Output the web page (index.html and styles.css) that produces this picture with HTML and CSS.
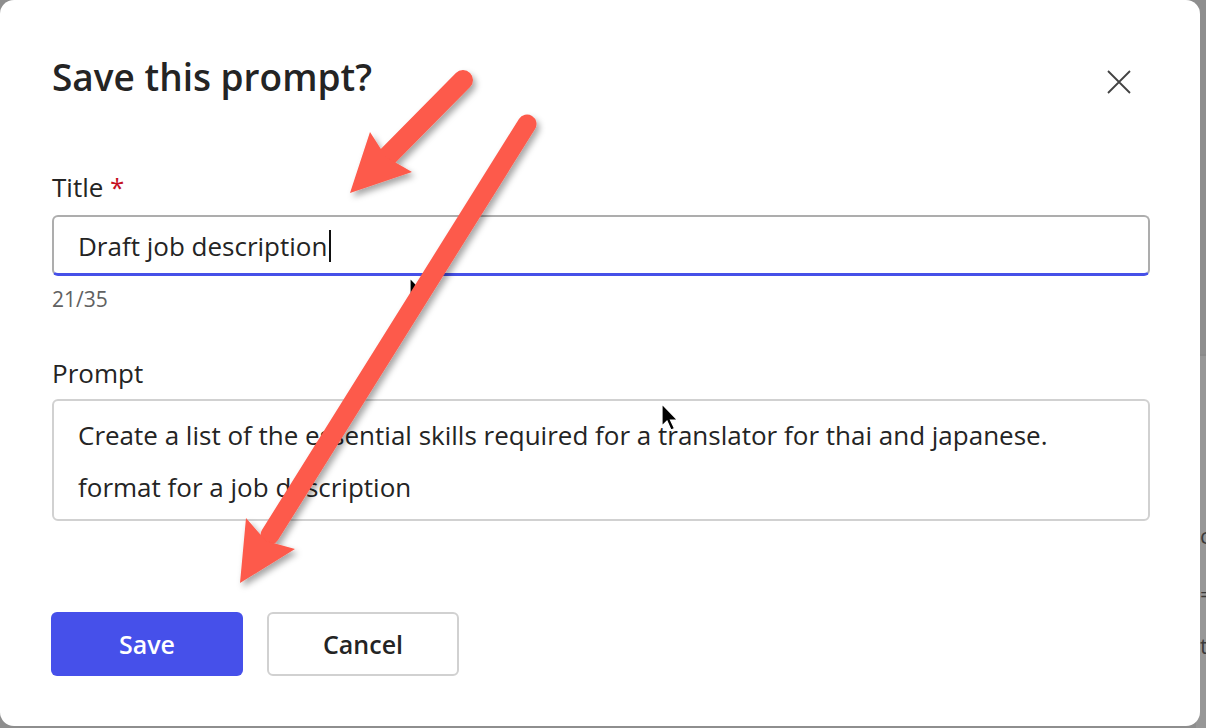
FILE: index.html
```html
<!DOCTYPE html>
<html lang="en">
<head>
<meta charset="utf-8">
<title>Save this prompt?</title>
<link rel="stylesheet" href="styles.css">
</head>
<body>
<div class="backdrop">
  <span class="bg-char bg-c">c</span>
  <span class="bg-char bg-eq">=</span>
  <span class="bg-char bg-t">t</span>
</div>
<div class="dialog">
  <div class="head">
    <h1 class="heading">Save this prompt?</h1>
    <button class="close" aria-label="Close">
      <svg width="24" height="24" viewBox="0 0 24 24"><path d="M1 1 L23 23 M23 1 L1 23" stroke="#424242" stroke-width="1.8" fill="none"/></svg>
    </button>
  </div>
  <div class="field">
    <div class="label">Title <span class="req">*</span></div>
    <div class="input"><span class="value">Draft job description</span><span class="caret"></span></div>
    <div class="count">21/35</div>
  </div>
  <div class="field field-prompt">
    <div class="label">Prompt</div>
    <div class="textarea">Create a list of the essential skills required for a translator for thai and japanese.<br>format for a job description</div>
  </div>
  <div class="actions">
    <button class="btn btn-primary">Save</button>
    <button class="btn btn-secondary">Cancel</button>
  </div>
</div>
<svg class="overlay" width="1206" height="728" viewBox="0 0 1206 728">
  <defs>
    <filter id="sh" x="-20%" y="-20%" width="140%" height="140%">
      <feDropShadow dx="3" dy="4" stdDeviation="3" flood-color="#000" flood-opacity="0.35"/>
    </filter>
  </defs>
  <g class="cursor" transform="translate(410 278)">
    <path d="M0 0 L0 22 L5 17 L9 26 L12.5 24.5 L8.5 16 L15.5 16 Z" fill="#000" stroke="#fff" stroke-width="1.2"/>
  </g>
  <g filter="url(#sh)" fill="#fd5a4b">
    <line x1="463" y1="80" x2="382" y2="162" stroke="#fd5a4b" stroke-width="20" stroke-linecap="round"/>
    <polygon points="350,193 370,132 386,157 412,172"/>
  </g>
  <g filter="url(#sh)" fill="#fd5a4b">
    <line x1="527" y1="124" x2="270" y2="535" stroke="#fd5a4b" stroke-width="19" stroke-linecap="round"/>
    <polygon points="240,583 246,518 266,541 295,549"/>
  </g>
  <g class="cursor" transform="translate(662 404)">
    <path d="M0 0 L0 22 L5 17 L9 26 L12.5 24.5 L8.5 16 L15.5 16 Z" fill="#000" stroke="#fff" stroke-width="1.2"/>
  </g>
</svg>
</body>
</html>
```
FILE: styles.css
```css
html, body {
  margin: 0;
  padding: 0;
}
body {
  width: 1206px;
  height: 728px;
  background: #8e8e8e;
  position: relative;
  overflow: hidden;
  font-family: "Open Sans", "Noto Sans", sans-serif;
  color: #242424;
}
.backdrop {
  position: absolute;
  left: 1196px;
  top: 354px;
  width: 10px;
  height: 374px;
  overflow: hidden;
  background: #979797;
  border-top: 2px solid #8a8a8a;
}
.bg-char {
  position: absolute;
  left: 4px;
  font-size: 22px;
  color: #3a3a3a;
  line-height: 1;
}
.bg-c { top: 168px; }
.bg-eq { top: 226px; }
.bg-t { top: 278px; }
.dialog {
  position: relative;
  width: 1200px;
  height: 726px;
  box-sizing: border-box;
  background: #fff;
  border-radius: 14px;
  padding: 51px 50px 0 52px;
}
.head {
  display: flex;
  justify-content: space-between;
  align-items: flex-start;
  height: 120px;
}
.heading {
  margin: 0;
  font-size: 37px;
  line-height: 52px;
  font-weight: 600;
  color: #242424;
}
.close {
  margin: 11px 11px 0 0;
  width: 40px;
  height: 40px;
  padding: 0;
  border: 0;
  background: transparent;
  display: flex;
  align-items: center;
  justify-content: center;
}
.label {
  font-size: 26px;
  line-height: 32px;
  color: #242424;
}
.req {
  color: #c50f1f;
}
.input {
  margin-top: 12px;
  height: 61px;
  box-sizing: border-box;
  border: 2px solid #adadad;
  border-bottom: 3px solid #4650e8;
  border-radius: 6px;
  padding: 13px 24px 11px 24px;
  font-size: 26px;
  line-height: 32px;
  display: flex;
  align-items: center;
}
.caret {
  display: inline-block;
  width: 2px;
  height: 32px;
  background: #111;
  margin-left: 2px;
}
.count {
  margin-top: 11px;
  font-size: 21px;
  line-height: 24px;
  color: #616161;
}
.field-prompt {
  margin-top: 46px;
}
.field-prompt .label {
  margin-bottom: 10px;
}
.textarea {
  height: 122px;
  box-sizing: border-box;
  border: 2px solid #d1d1d1;
  border-radius: 6px;
  padding: 8px 24px 0 24px;
  font-size: 26px;
  line-height: 52px;
}
.actions {
  margin-top: 91px;
  display: flex;
  gap: 24px;
  margin-left: -1px;
}
.btn {
  width: 192px;
  height: 64px;
  border-radius: 6px;
  font-family: "Open Sans", "Noto Sans", sans-serif;
  font-size: 25px;
  font-weight: 600;
  box-sizing: border-box;
}
.btn-primary {
  background: #4650ea;
  color: #fff;
  border: 0;
}
.btn-secondary {
  background: #fff;
  color: #242424;
  border: 2px solid #d1d1d1;
}
.overlay {
  position: absolute;
  left: 0;
  top: 0;
  pointer-events: none;
}
```
